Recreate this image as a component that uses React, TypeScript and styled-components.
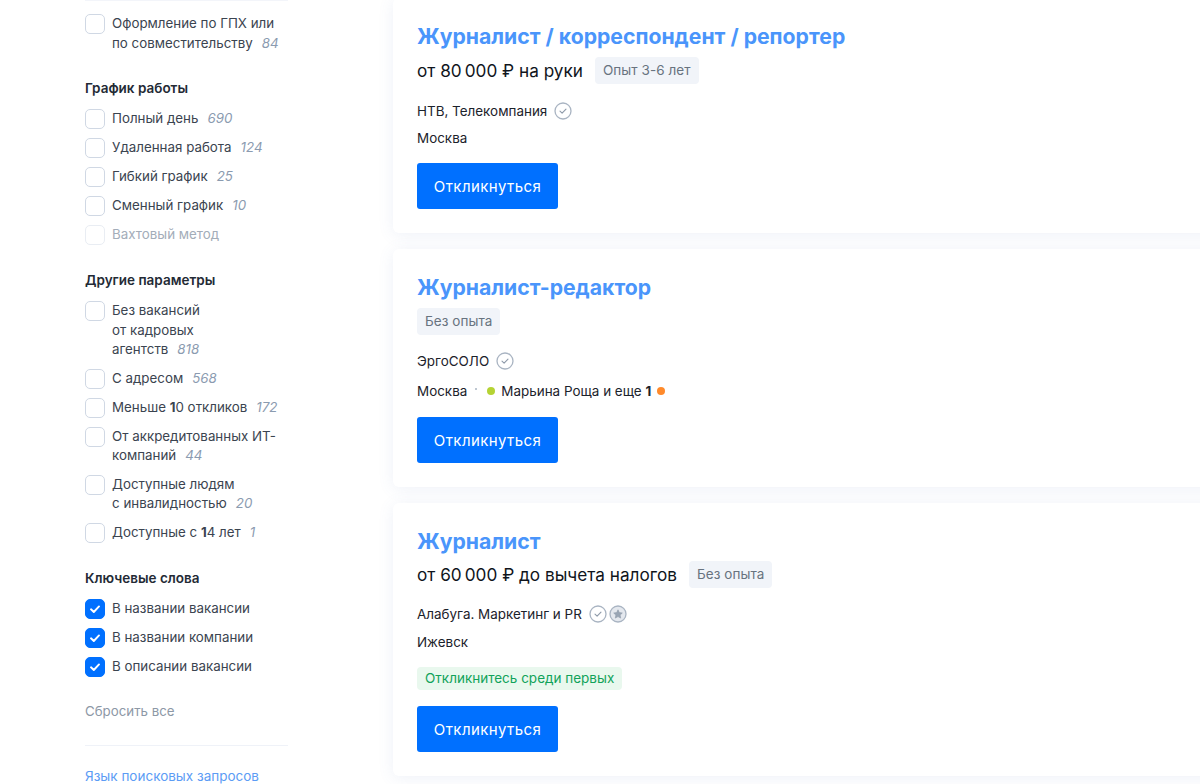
import { createGlobalStyle, styled } from "styled-components";

const GlobalStyle = createGlobalStyle`
  html, body {
    margin: 0;
    padding: 0;
    height: 784px;
    overflow: hidden;
    background: #fff;
    font-family: Inter, "Liberation Sans", sans-serif;
    color: #1f2733;
  }
  * { box-sizing: border-box; }
`;

const Page = styled.div`
  display: flex;
  align-items: flex-start;
  width: 1200px;
  height: 784px;
  overflow: hidden;
  padding-left: 85px;
`;

const Sidebar = styled.aside`
  flex: 0 0 203px;
  margin-right: 105px;
  border-top: 1px solid #f3f5fa;
  padding-top: 13px;
`;

const Group = styled.section`
  display: flex;
  flex-direction: column;
  gap: 9px;
  margin-bottom: 25px;
`;

const GroupTitle = styled.h3`
  margin: 0 0 2px;
  font-size: 13.5px;
  line-height: 20px;
  font-weight: 600;
  color: #232a35;
`;

const Row = styled.label<{ $disabled?: boolean }>`
  display: flex;
  gap: 7px;
  font-size: 13.35px;
  line-height: 19.5px;
  color: ${(p) => (p.$disabled ? "#a3adb9" : "#3b4450")};
`;

const Box = styled.span<{ $checked?: boolean; $disabled?: boolean }>`
  flex: 0 0 20px;
  display: flex;
  align-items: center;
  justify-content: center;
  width: 20px;
  height: 20px;
  border-radius: 5px;
  border: 1.5px solid ${(p) => (p.$checked ? "#0070ff" : p.$disabled ? "#e9edf3" : "#d0d8e4")};
  background: ${(p) => (p.$checked ? "#0070ff" : "#fff")};
`;

const Count = styled.i`
  margin-left: 9px;
  font-style: italic;
  color: #8b9bb0;
`;

const Strong = styled.b`
  font-weight: 700;
`;

const Reset = styled.div`
  font-size: 13.3px;
  line-height: 18px;
  color: #8d98a6;
  margin-top: 16px;
`;

const Divider = styled.hr`
  border: 0;
  border-top: 1px solid #eff2f8;
  margin: 0 0 20px;
`;

const LangLink = styled.a`
  display: block;
  font-size: 13.5px;
  line-height: 20px;
  color: #5c9cf5;
`;

const Results = styled.main`
  flex: 0 0 840px;
  display: flex;
  flex-direction: column;
  gap: 16px;
  margin-top: -2px;
`;

const Card = styled.article`
  display: flex;
  flex-direction: column;
  align-items: flex-start;
  padding: 24px;
  background: #fff;
  border-radius: 6px;
  box-shadow: 0 2px 16px rgba(90, 120, 190, 0.1);
`;

const Title = styled.a`
  font-size: 21.2px;
  line-height: 28px;
  font-weight: 700;
  color: #4a95fb;
`;

const SalaryRow = styled.div<{ $gap: number }>`
  display: flex;
  align-items: center;
  gap: 12px;
  margin-top: ${(p) => p.$gap}px;
`;

const Salary = styled.span`
  font-size: 17.2px;
  line-height: 27px;
  color: #10151c;
`;

const Tag = styled.span`
  padding: 0 8px;
  font-size: 13.5px;
  letter-spacing: 0.05px;
  line-height: 27px;
  border-radius: 4px;
  color: #68737f;
  background: #f1f4f9;
`;

const Company = styled.div<{ $gap: number }>`
  display: flex;
  align-items: center;
  gap: 7px;
  margin-top: ${(p) => p.$gap}px;
  font-size: 13.45px;
  line-height: 20px;
  color: #1c222b;
`;

const Badges = styled.span`
  display: flex;
  gap: 2px;
`;

const City = styled.div<{ $gap: number }>`
  display: flex;
  align-items: center;
  margin-top: ${(p) => p.$gap}px;
  font-size: 13.45px;
  line-height: 20px;
  color: #1c222b;
`;

const Dot = styled.span<{ $color: string; $size?: number; $mx?: string }>`
  flex: none;
  width: ${(p) => p.$size ?? 8}px;
  height: ${(p) => p.$size ?? 8}px;
  margin: ${(p) => p.$mx ?? "0 6px"};
  border-radius: 50%;
  background: ${(p) => p.$color};
`;

const FirstTag = styled.span`
  margin-top: 15px;
  padding: 0 8px;
  font-size: 13.5px;
  line-height: 23px;
  border-radius: 4px;
  color: #11a35a;
  background: #e9f8ee;
`;

const Apply = styled.button<{ $gap: number }>`
  width: 141px;
  height: 46px;
  margin-top: ${(p) => p.$gap}px;
  padding: 0;
  border: 0;
  border-radius: 3px;
  font-family: inherit;
  font-size: 15px;
  letter-spacing: 0.4px;
  color: #fff;
  background: #0070ff;
`;

const Check = () => (
  <svg width="12" height="12" viewBox="0 0 12 12" fill="none">
    <path d="M2 6.3 4.8 9 10 3.4" stroke="#fff" strokeWidth="1.9" strokeLinecap="round" strokeLinejoin="round" />
  </svg>
);

const Verified = () => (
  <svg width="18" height="18" viewBox="0 0 18 18" fill="none">
    <circle cx="9" cy="9" r="8" stroke="#a9b4c2" strokeWidth="1.3" />
    <path d="M6 9.2 8.1 11.2 12 7.1" stroke="#8e9aa9" strokeWidth="1.1" strokeLinecap="round" strokeLinejoin="round" />
  </svg>
);

const Trusted = () => (
  <svg width="18" height="18" viewBox="0 0 18 18" fill="none">
    <circle cx="9" cy="9" r="8" fill="#e4e8ee" stroke="#a9b4c2" strokeWidth="1.3" />
    <path d="M9 4.8 10.3 7.6l3 .4-2.2 2.1.6 3L9 11.6l-2.7 1.5.6-3L4.7 8l3-.4z" fill="#99a5b4" stroke="#8e9aa9" strokeWidth="0.6" strokeLinejoin="round" />
  </svg>
);

type Item = { text: React.ReactNode; count?: string; checked?: boolean; disabled?: boolean };

const FilterRow = ({ text, count, checked, disabled }: Item) => (
  <Row $disabled={disabled}>
    <Box $checked={checked} $disabled={disabled}>{checked && <Check />}</Box>
    <span>
      {text}
      {count && <Count>{count}</Count>}
    </span>
  </Row>
);

export default function App() {
  return (
    <>
      <GlobalStyle />
      <Page>
        <Sidebar>
          <Group>
            <FilterRow text={<>Оформление по ГПХ или<br />по совместительству</>} count="84" />
          </Group>
          <Group>
            <GroupTitle>График работы</GroupTitle>
            <FilterRow text="Полный день" count="690" />
            <FilterRow text="Удаленная работа" count="124" />
            <FilterRow text="Гибкий график" count="25" />
            <FilterRow text="Сменный график" count="10" />
            <FilterRow text="Вахтовый метод" disabled />
          </Group>
          <Group>
            <GroupTitle>Другие параметры</GroupTitle>
            <FilterRow text={<>Без вакансий<br />от кадровых<br />агентств</>} count="818" />
            <FilterRow text="С адресом" count="568" />
            <FilterRow text={<>Меньше <Strong>1</Strong>0 откликов</>} count="172" />
            <FilterRow text={<>От аккредитованных ИТ-<br />компаний</>} count="44" />
            <FilterRow text={<>Доступные людям<br />с инвалидностью</>} count="20" />
            <FilterRow text={<>Доступные с <Strong>1</Strong>4 лет</>} count="1" />
          </Group>
          <Group>
            <GroupTitle>Ключевые слова</GroupTitle>
            <FilterRow text="В названии вакансии" checked />
            <FilterRow text="В названии компании" checked />
            <FilterRow text="В описании вакансии" checked />
            <Reset>Сбросить все</Reset>
          </Group>
          <Divider />
          <LangLink>Язык поисковых запросов</LangLink>
        </Sidebar>
        <Results>
          <Card>
            <Title>Журналист / корреспондент / репортер</Title>
            <SalaryRow $gap={7}>
              <Salary>от 80&#8201;000 ₽ на руки</Salary>
              <Tag>Опыт 3-6 лет</Tag>
            </SalaryRow>
            <Company $gap={17}>НТВ, Телекомпания <Verified /></Company>
            <City $gap={7}>Москва</City>
            <Apply $gap={15}>Откликнуться</Apply>
          </Card>
          <Card>
            <Title>Журналист-редактор</Title>
            <SalaryRow $gap={7}>
              <Tag>Без опыта</Tag>
            </SalaryRow>
            <Company $gap={16}>ЭргоСОЛО <Verified /></Company>
            <City $gap={10}>
              Москва
              <Dot $color="#a9b4c2" $size={2} $mx="0 10px 4px 8px" />
              <Dot $color="#b5d334" $mx="0 6px 0 0" />
              Марьина Роща и еще&nbsp;<Strong>1</Strong>
              <Dot $color="#ff8a2b" />
            </City>
            <Apply $gap={16}>Откликнуться</Apply>
          </Card>
          <Card>
            <Title>Журналист</Title>
            <SalaryRow $gap={6}>
              <Salary>от 60&#8201;000 ₽ до вычета налогов</Salary>
              <Tag>Без опыта</Tag>
            </SalaryRow>
            <Company $gap={16}>Алабуга. Маркетинг и PR <Badges><Verified /><Trusted /></Badges></Company>
            <City $gap={8}>Ижевск</City>
            <FirstTag>Откликнитесь среди первых</FirstTag>
            <Apply $gap={16}>Откликнуться</Apply>
          </Card>
        </Results>
      </Page>
    </>
  );
}
